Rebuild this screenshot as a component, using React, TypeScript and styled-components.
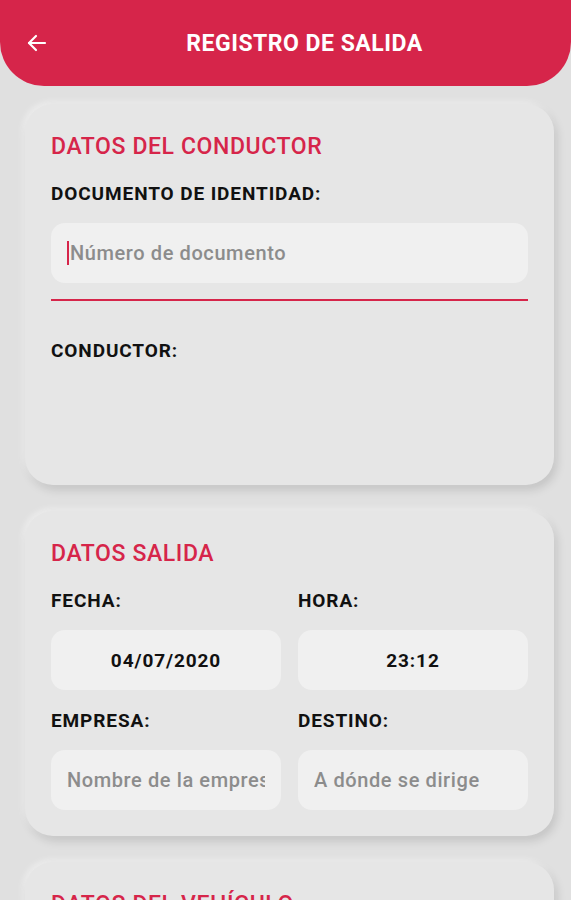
import styled, { createGlobalStyle } from 'styled-components';

const GlobalStyle = createGlobalStyle`
  html, body {
    margin: 0;
    padding: 0;
    background: #e0e0e0;
    font-family: Roboto, "Liberation Sans", sans-serif;
  }
  * { box-sizing: border-box; }
`;

const Screen = styled.div`
  width: 571px;
  height: 900px;
  overflow: hidden;
  background: #e0e0e0;
`;

const Header = styled.header`
  height: 86px;
  background: #d6254a;
  border-radius: 0 0 44px 44px;
  display: flex;
  align-items: center;
  padding: 0 24px 0 24px;
  color: #fff;
`;

const BackButton = styled.button`
  width: 26px;
  height: 26px;
  padding: 0;
  border: none;
  background: transparent;
  display: flex;
  align-items: center;
  justify-content: center;
`;

const Title = styled.h1`
  flex: 1;
  margin: 0;
  padding-left: 12px;
  text-align: center;
  font-size: 23px;
  font-weight: 700;
  letter-spacing: 0.5px;
  color: #fff;
`;

const Content = styled.main`
  display: flex;
  flex-direction: column;
  gap: 26px;
  padding: 18px 17px 0 25px;
`;

const Card = styled.section`
  background: #e6e6e6;
  border-radius: 28px;
  box-shadow: 3px 5px 10px rgba(0, 0, 0, 0.13), -2px -2px 6px rgba(255, 255, 255, 0.5);
  padding: 28px 26px 26px 26px;
  display: flex;
  flex-direction: column;
`;

const SectionTitle = styled.h2`
  margin: 0 0 20px 0;
  font-size: 23px;
  font-weight: 500;
  letter-spacing: 0.6px;
  color: #d6254a;
  line-height: 30px;
  white-space: nowrap;
`;

const Label = styled.div`
  font-size: 19px;
  font-weight: 700;
  letter-spacing: 0.9px;
  color: #111;
  line-height: 24px;
  white-space: nowrap;
`;

const Field = styled.div<{ $center?: boolean; $bold?: boolean; $placeholder?: boolean }>`
  margin-top: 17px;
  height: 60px;
  background: #f0f0f0;
  border-radius: 14px;
  display: flex;
  align-items: center;
  justify-content: ${p => (p.$center ? 'center' : 'flex-start')};
  padding: 0 16px;
  font-size: ${p => (p.$bold ? '19px' : '20px')};
  letter-spacing: ${p => (p.$bold ? '0.9px' : '0.6px')};
  font-weight: ${p => (p.$bold ? 700 : 500)};
  color: ${p => (p.$placeholder ? '#8c8c8c' : '#111')};
  white-space: nowrap;
`;

const Value = styled.span`
  overflow: hidden;
  white-space: nowrap;
  min-width: 0;
`;

const Caret = styled.span`
  display: inline-block;
  flex: none;
  width: 2px;
  height: 24px;
  background: #d6254a;
  margin-right: 1px;
`;

const Underline = styled.div`
  height: 2px;
  background: #d6254a;
  margin-top: 16px;
`;

const Grid = styled.div`
  display: grid;
  grid-template-columns: 1fr 1fr;
  column-gap: 17px;
  row-gap: 19px;
`;

const Cell = styled.div`
  display: flex;
  flex-direction: column;
  min-width: 0;
`;

const DriverBlock = styled.div`
  margin-top: 38px;
  height: 120px;
`;

export default function App() {
  return (
    <Screen>
      <GlobalStyle />
      <Header>
        <BackButton aria-label="Volver">
          <svg width="24" height="24" viewBox="0 0 24 24" fill="none" stroke="#fff" strokeWidth="2.2" strokeLinecap="round" strokeLinejoin="round">
            <line x1="20" y1="12" x2="4" y2="12" />
            <polyline points="11,5 4,12 11,19" />
          </svg>
        </BackButton>
        <Title>REGISTRO DE SALIDA</Title>
      </Header>
      <Content>
        <Card>
          <SectionTitle>DATOS DEL CONDUCTOR</SectionTitle>
          <Label>DOCUMENTO DE IDENTIDAD:</Label>
          <Field $placeholder>
            <Caret />
            <Value>Número de documento</Value>
          </Field>
          <Underline />
          <DriverBlock>
            <Label>CONDUCTOR:</Label>
          </DriverBlock>
        </Card>
        <Card>
          <SectionTitle>DATOS SALIDA</SectionTitle>
          <Grid>
            <Cell>
              <Label>FECHA:</Label>
              <Field $center $bold><Value>04/07/2020</Value></Field>
            </Cell>
            <Cell>
              <Label>HORA:</Label>
              <Field $center $bold><Value>23:12</Value></Field>
            </Cell>
            <Cell>
              <Label>EMPRESA:</Label>
              <Field $placeholder><Value>Nombre de la empresa</Value></Field>
            </Cell>
            <Cell>
              <Label>DESTINO:</Label>
              <Field $placeholder><Value>A dónde se dirige</Value></Field>
            </Cell>
          </Grid>
        </Card>
        <Card>
          <SectionTitle>DATOS DEL VEHÍCULO</SectionTitle>
          <Label>PLACA:</Label>
        </Card>
      </Content>
    </Screen>
  );
}
